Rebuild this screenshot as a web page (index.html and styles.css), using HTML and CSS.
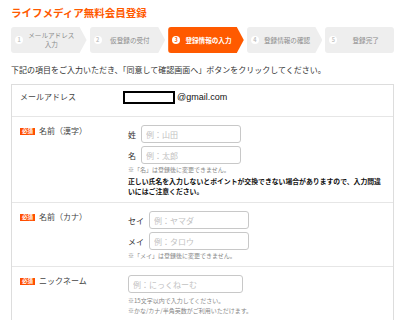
FILE: index.html
```html
<!DOCTYPE html>
<html lang="ja">
<head>
    <meta charset="UTF-8">
    <meta name="viewport" content="width=device-width, initial-scale=1.0">
    <title>ライフメディア無料会員登録</title>
    <link rel="stylesheet" href="styles.css">
</head>
<body>
<div class="page">
    <h1 class="title">ライフメディア無料会員登録</h1>

    <ol class="steps">
        <li class="step"><span class="num">1</span><span class="step-text">メールアドレス<br>入力</span></li>
        <li class="step"><span class="num">2</span><span class="step-text">仮登録の受付</span></li>
        <li class="step step-active"><span class="num">3</span><span class="step-text">登録情報の入力</span></li>
        <li class="step"><span class="num">4</span><span class="step-text">登録情報の確認</span></li>
        <li class="step step-last"><span class="num">5</span><span class="step-text">登録完了</span></li>
    </ol>

    <p class="intro">下記の項目をご入力いただき、「同意して確認画面へ」ボタンをクリックしてください。</p>

    <div class="form">
        <div class="row row-email">
            <div class="label">メールアドレス</div>
            <div class="value value-email"><span class="masked"></span><span class="mail">@gmail.com</span></div>
        </div>

        <div class="row">
            <div class="label"><span class="req">必須</span>名前（漢字）</div>
            <div class="value">
                <div class="field"><span class="sub">姓</span><input type="text" placeholder="例：山田"></div>
                <div class="field"><span class="sub">名</span><input type="text" placeholder="例：太郎"></div>
                <p class="note">※「名」は登録後に変更できません。</p>
                <p class="warn">正しい氏名を入力しないとポイントが交換できない場合がありますので、入力間違いにはご注意ください。</p>
            </div>
        </div>

        <div class="row">
            <div class="label"><span class="req">必須</span>名前（カナ）</div>
            <div class="value">
                <div class="field"><span class="sub">セイ</span><input type="text" placeholder="例：ヤマダ"></div>
                <div class="field"><span class="sub">メイ</span><input type="text" placeholder="例：タロウ"></div>
                <p class="note">※「メイ」は登録後に変更できません。</p>
            </div>
        </div>

        <div class="row">
            <div class="label"><span class="req">必須</span>ニックネーム</div>
            <div class="value">
                <div class="field"><input type="text" class="wide" placeholder="例：にっくねーむ"></div>
                <p class="note note-list">※15文字以内で入力してください。</p>
                <p class="note note-list">※かな/カナ/半角英数がご利用いただけます。</p>
            </div>
        </div>
    </div>
</div>
</body>
</html>
```

FILE: styles.css
```css
body {
    margin: 0;
    font-family: "Noto Sans CJK JP", "Noto Sans", sans-serif;
    background-color: #fff;
    color: #333;
}
.page {
    width: 383px;
    padding: 6px 0 0 11px;
}
.title {
    margin: 0 0 7px;
    font-size: 10.5px;
    line-height: 14px;
    font-weight: bold;
    color: #ff5a00;
}

/* progress steps */
.steps {
    list-style: none;
    margin: 0;
    padding: 0;
    display: flex;
    gap: 3px;
    height: 26px;
}
.step {
    flex: 1;
    display: flex;
    align-items: center;
    padding: 0 7px 0 4px;
    background-color: #eee;
    color: #8c8c8c;
    font-size: 6.6px;
    line-height: 9px;
    border-radius: 3px 0 0 3px;
    clip-path: polygon(0 0, calc(100% - 7px) 0, 100% 50%, calc(100% - 7px) 100%, 0 100%);
}
.step-last {
    padding-right: 0;
    border-radius: 3px;
    clip-path: none;
}
.step-active {
    background-color: #ff5a00;
    color: #fff;
    font-weight: bold;
}
.num {
    flex-shrink: 0;
    width: 8px;
    height: 8px;
    border-radius: 50%;
    background-color: #fff;
    color: #c4c4c4;
    font-size: 5.5px;
    line-height: 8px;
    text-align: center;
    font-weight: bold;
}
.step-active .num {
    color: #ff5a00;
}
.step-text {
    flex: 1;
    text-align: center;
}

.intro {
    margin: 11px 0 8px;
    font-size: 8px;
    line-height: 12px;
    color: #333;
}

/* form table */
.form {
    border: 1px solid #ddd;
}
.row {
    display: flex;
    padding: 8px 8px 6px;
    border-bottom: 1px solid #e6e6e6;
}
.row:last-child {
    border-bottom: none;
}
.row-email {
    align-items: center;
    padding: 5px 8px 12px;
}
.label {
    flex-shrink: 0;
    width: 108px;
    display: flex;
    align-items: center;
    height: 12px;
    font-size: 8px;
    line-height: 12px;
    color: #444;
}
.row-email .label {
    height: 14px;
}
.req {
    display: inline-block;
    margin-right: 4px;
    padding: 0 2px;
    background-color: #ff4e00;
    color: #fff;
    font-size: 5.5px;
    line-height: 7px;
    font-weight: bold;
}
.value {
    flex: 1;
}
.value-email {
    display: flex;
    align-items: center;
    height: 14px;
}
.masked {
    display: inline-block;
    box-sizing: border-box;
    width: 52px;
    height: 13px;
    margin: 0 2px 0 -5px;
    border: 2px solid #000;
}
.mail {
    font-family: "Liberation Sans", Arial, sans-serif;
    font-size: 9px;
    color: #111;
}
.field {
    display: flex;
    align-items: center;
    margin-bottom: 3px;
}
.field:last-of-type {
    margin-bottom: 0;
}
.sub {
    margin-right: 5px;
    font-size: 8px;
    color: #333;
}
input {
    box-sizing: border-box;
    width: 100px;
    height: 18px;
    padding: 0 4px;
    border: 1px solid #c8c8c8;
    border-radius: 3px;
    font-family: inherit;
    font-size: 8px;
    color: #333;
}
input::placeholder {
    color: #c2c2c2;
}
input.wide {
    width: 115px;
}
.note {
    margin: 2px 0 0;
    font-size: 6px;
    line-height: 8px;
    color: #888;
}
.note-list {
    margin: 0;
    line-height: 10px;
}
.field + .note-list {
    margin-top: 3px;
}
.warn {
    margin: 2px 0 0;
    font-size: 6.85px;
    line-height: 10px;
    font-weight: bold;
    color: #111;
}
```
